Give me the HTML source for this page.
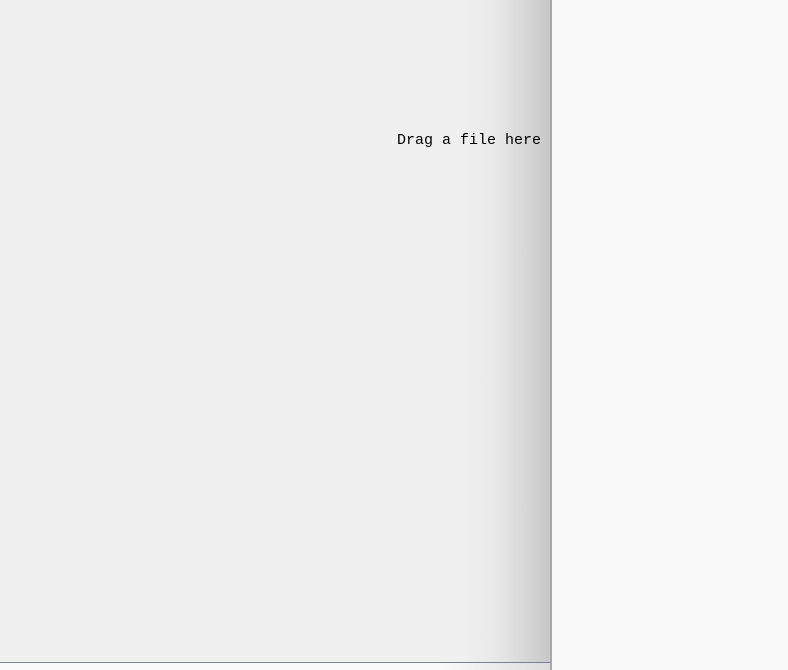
<!DOCTYPE html>
<html><head><style>
html,body{margin:0;padding:0;width:788px;height:670px;overflow:hidden;background:#f0f0f0;position:relative}
.txt{position:absolute;left:397px;top:131px;font:15px "Liberation Mono",monospace;color:#000;white-space:nowrap;line-height:20px}
.shadow{position:absolute;left:460px;top:0;width:90px;height:662px;background:linear-gradient(to right,rgba(0,0,0,0),rgba(0,0,0,0.03) 40%,rgba(0,0,0,0.17))}
.line{position:absolute;left:0;top:662px;width:551px;height:1px;background:#7a8290}
.bot{position:absolute;left:0;top:663px;width:551px;height:7px;background:linear-gradient(to right,#fafafa,#fafafa 80%,#dcdcdc)}
.edge{position:absolute;left:550px;top:0;width:2px;height:670px;background:#a8a8a8}
.panel{position:absolute;left:552px;top:0;width:236px;height:670px;background:#f9f9f9}
</style></head><body>
<div class="txt">Drag a file here to open</div>
<div class="shadow"></div>
<div class="line"></div>
<div class="bot"></div>
<div class="edge"></div>
<div class="panel"></div>
</body></html>
